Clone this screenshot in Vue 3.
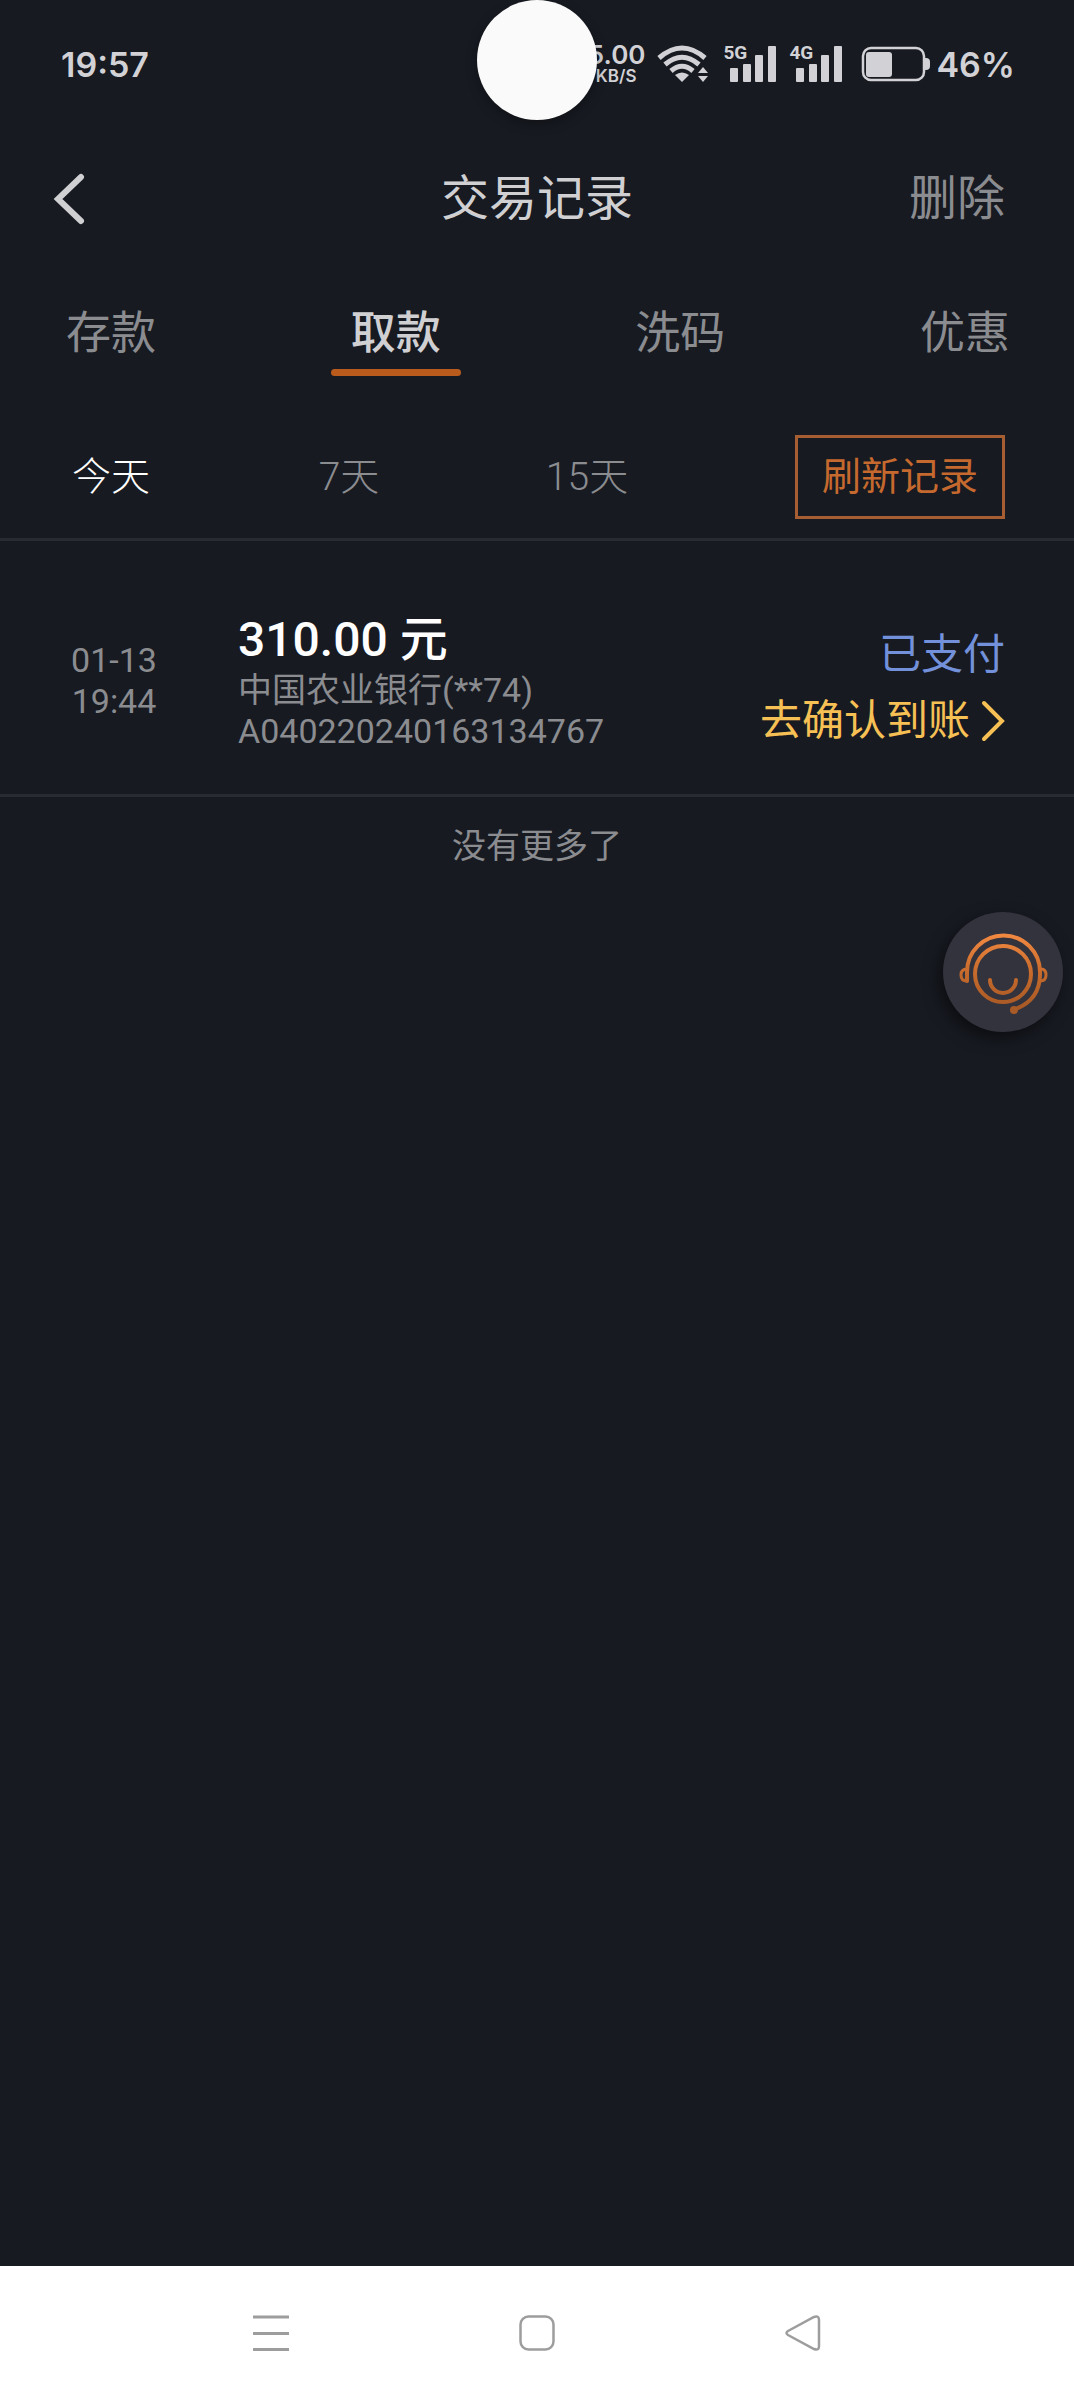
<script setup>
import { ref } from 'vue'

const tabs = ['存款', '取款', '洗码', '优惠']
const activeTab = ref('取款')

const ranges = ['今天', '7天', '15天']
const activeRange = ref('今天')

const networks = ['5G', '4G']

const records = [
  {
    date: '01-13',
    time: '19:44',
    amount: '310.00 元',
    bank: '中国农业银行(**74)',
    order: 'A040220240163134767',
    status: '已支付',
    action: '去确认到账'
  }
]
</script>

<template>
  <div class="screen">
    <div class="status-bar">
      <span class="clock">19:57</span>
      <div class="indicators">
        <div class="speed">
          <span class="speed-value">5.00</span>
          <span class="speed-unit">KB/S</span>
        </div>
        <svg class="wifi" width="50" height="38" viewBox="0 0 50 38" fill="none" stroke="currentColor" stroke-width="5">
          <path d="M2 13Q25 -7 48 13" />
          <path d="M8 19.500Q25 5 42 19.500" />
          <path d="M14 26Q25 16.500 36 26" />
          <path d="M18 30Q25 25 32 30L25 37Z" fill="currentColor" stroke="none" />
          <path d="M46 22L51 28H41ZM46 37L51 31H41Z" fill="currentColor" stroke="none" />
        </svg>
        <div v-for="net in networks" :key="net" class="signal">
          <span class="signal-label">{{ net }}</span>
          <svg width="46" height="36" viewBox="0 0 46 36" fill="currentColor">
            <rect x="0" y="22" width="8" height="14" rx="1" />
            <rect x="13" y="18" width="8" height="18" rx="1" />
            <rect x="25" y="9" width="8" height="27" rx="1" />
            <rect x="38" y="0" width="8" height="36" rx="1" />
          </svg>
        </div>
        <svg class="battery" width="68" height="34" viewBox="0 0 68 34" fill="currentColor">
          <rect x="1" y="1" width="61" height="32" rx="8" fill="none" stroke="currentColor" stroke-width="2.500" />
          <rect x="4" y="5" width="26" height="25" rx="3" />
          <path d="M63 11h1q4 0 4 4v4q0 4-4 4h-1z" />
        </svg>
        <span class="percent">46%</span>
      </div>
      <div class="camera"></div>
    </div>

    <header class="header">
      <button class="back" aria-label="返回">
        <svg width="32" height="52" viewBox="0 0 32 52" fill="none" stroke="currentColor" stroke-width="6" stroke-linecap="round">
          <path d="M28 4L5 26L28 48" stroke-linejoin="miter" />
        </svg>
      </button>
      <h1 class="title">交易记录</h1>
      <button class="delete">删除</button>
    </header>

    <nav class="tabs">
      <button
        v-for="tab in tabs"
        :key="tab"
        class="tab"
        :class="{ active: tab === activeTab }"
        @click="activeTab = tab"
      >{{ tab }}</button>
    </nav>

    <div class="filters">
      <div class="ranges">
        <button
          v-for="range in ranges"
          :key="range"
          class="range"
          :class="{ active: range === activeRange }"
          @click="activeRange = range"
        >{{ range }}</button>
      </div>
      <button class="refresh">刷新记录</button>
    </div>

    <main class="list">
      <article v-for="record in records" :key="record.order" class="record">
        <div class="when">
          <span>{{ record.date }}</span>
          <span>{{ record.time }}</span>
        </div>
        <div class="detail">
          <strong class="amount">{{ record.amount }}</strong>
          <span>{{ record.bank }}</span>
          <span>{{ record.order }}</span>
        </div>
        <div class="outcome">
          <span class="paid">{{ record.status }}</span>
          <a class="confirm" href="#">
            {{ record.action }}
            <svg width="25" height="42" viewBox="0 0 25 42" fill="none" stroke="currentColor" stroke-width="4" stroke-linecap="round">
              <path d="M4 3L22 21L4 39" />
            </svg>
          </a>
        </div>
      </article>
      <p class="end">没有更多了</p>
    </main>

    <button class="support" aria-label="客服">
      <svg width="120" height="120" viewBox="0 0 120 120" fill="none" stroke="url(#support-stroke)" stroke-width="4" stroke-linecap="round">
        <defs>
          <linearGradient id="support-stroke" gradientUnits="userSpaceOnUse" x1="60" y1="20" x2="60" y2="102">
            <stop offset="0" stop-color="#f58b42" />
            <stop offset="0.500" stop-color="#c66a2c" />
            <stop offset="1" stop-color="#a35624" />
          </linearGradient>
        </defs>
        <circle cx="60" cy="62" r="28" />
        <path d="M24 69V60A36.500 36.500 0 0 1 97 60Q98 87 73 97" />
        <path d="M24 57Q18 57 18 63T24 69" stroke-width="3" />
        <path d="M98 57Q103 57 103 63T97 69" stroke-width="3" />
        <path d="M47 68A13 13 0 0 0 73 68" />
        <circle cx="71" cy="98" r="4" fill="#a85a27" stroke="none" />
      </svg>
    </button>

    <footer class="system-nav">
      <button aria-label="最近任务">
        <svg width="36" height="36" viewBox="0 0 36 36" stroke="currentColor" stroke-width="3">
          <path d="M0 2H36M0 18.500H36M0 34.500H36" />
        </svg>
      </button>
      <button aria-label="主屏幕">
        <svg width="36" height="36" viewBox="0 0 36 36" fill="none" stroke="currentColor" stroke-width="2.500">
          <rect x="1.500" y="1.500" width="33" height="33" rx="8" />
        </svg>
      </button>
      <button aria-label="后退">
        <svg width="36" height="36" viewBox="0 0 36 36" fill="none" stroke="currentColor" stroke-width="2.500">
          <path d="M3 16L29 2Q34 0 34 5V31Q34 36 29 34L3 20Q0 18 3 16Z" />
        </svg>
      </button>
    </footer>
  </div>
</template>

<style>
body {
  margin: 0;
  background: #171a21;
}
</style>

<style scoped>
.screen {
  position: relative;
  display: flex;
  flex-direction: column;
  min-height: 100vh;
  background: #171a21;
  color: #8b8c90;
  font-family: Roboto, "Noto Sans CJK SC", sans-serif;
}

button {
  margin: 0;
  padding: 0;
  border: 0;
  background: none;
  color: inherit;
  font: inherit;
  cursor: pointer;
}

svg {
  display: block;
}

.status-bar {
  position: relative;
  display: flex;
  align-items: center;
  justify-content: space-between;
  height: 128px;
  padding: 0 59px 0 61px;
  color: #d2d2d6;
  font-family: Inter, sans-serif;
  font-weight: 600;
}

.clock,
.percent {
  font-size: 34px;
}

.indicators {
  display: flex;
  align-items: center;
}

.speed {
  display: flex;
  flex-direction: column;
  margin-right: 12px;
}

.speed-value {
  font-size: 26px;
  line-height: 24px;
}

.speed-unit {
  padding-left: 8px;
  font-size: 17px;
  line-height: 18px;
}

.wifi {
  margin-right: 23px;
  overflow: visible;
}

.signal {
  position: relative;
  margin-right: 20px;
}

.signal-label {
  position: absolute;
  top: -2px;
  left: -7px;
  font-family: Roboto, sans-serif;
  font-size: 19px;
  font-weight: 700;
  line-height: 18px;
}

.battery {
  margin-right: 6px;
  overflow: visible;
}

.camera {
  position: absolute;
  top: 0;
  left: 50%;
  width: 120px;
  height: 120px;
  margin-left: -60px;
  border-radius: 50%;
  background: #fafafa;
  box-shadow: 0 4px 12px rgba(0, 0, 0, 0.3);
}

.header {
  display: grid;
  grid-template-columns: 1fr auto 1fr;
  align-items: center;
  height: 142px;
  padding: 0 53px;
  color: #d0d0d3;
}

.back {
  justify-self: start;
}

.title {
  margin: 0;
  font-size: 48px;
  font-weight: 400;
  line-height: 64px;
}

.delete {
  justify-self: end;
  margin-right: 16px;
  color: #8b8c90;
  font-size: 48px;
  line-height: 64px;
}

.tabs {
  display: flex;
  justify-content: space-between;
  padding: 32px 44px 0 46px;
}

.tab {
  width: 130px;
  font-size: 45px;
  line-height: 64px;
}

.tab::after {
  content: "";
  display: block;
  height: 7px;
  margin-top: 3px;
  border-radius: 4px;
}

.tab.active {
  color: #d0d0d3;
  font-weight: 500;
}

.tab.active::after {
  background: #b95b1d;
}

.filters {
  display: flex;
  align-items: center;
  justify-content: space-between;
  padding: 59px 69px 19px 46px;
  border-bottom: 3px solid #282b32;
}

.ranges {
  display: flex;
  gap: 108px;
}

.range {
  width: 130px;
  font-size: 39px;
  font-weight: 300;
  line-height: 64px;
}

.range.active {
  color: #fff;
}

.refresh {
  padding: 0 24px;
  border: 3px solid #a65d31;
  color: #c5692e;
  font-size: 39px;
  line-height: 78px;
}

.list {
  flex: 1;
}

.record {
  display: flex;
  align-items: center;
  padding: 67px 69px 40px 73px;
  border-bottom: 3px solid #282b32;
  font-size: 34px;
  line-height: 41px;
}

.when,
.detail,
.outcome {
  display: flex;
  flex-direction: column;
  white-space: nowrap;
}

.when {
  align-items: center;
  width: 82px;
  margin-right: 83px;
}

.detail {
  flex: 1;
}

.amount {
  color: #fff;
  font-size: 48px;
  font-weight: 500;
  line-height: 60px;
}

.outcome {
  align-items: flex-end;
  padding-top: 14px;
  font-size: 42px;
  line-height: 66px;
}

.paid {
  color: #7391da;
}

.confirm {
  display: flex;
  align-items: center;
  gap: 10px;
  color: #f6c055;
  text-decoration: none;
}

.end {
  margin: 25px 0;
  font-size: 34px;
  line-height: 48px;
  text-align: center;
}

.support {
  position: absolute;
  top: 912px;
  right: 11px;
  width: 120px;
  height: 120px;
  border-radius: 50%;
  background: #33333d;
  box-shadow: -4px 6px 16px rgba(0, 0, 0, 0.5);
}

.system-nav {
  display: flex;
  align-items: center;
  justify-content: center;
  gap: 230px;
  height: 134px;
  background: #fff;
  color: #9d9d9d;
}
</style>
